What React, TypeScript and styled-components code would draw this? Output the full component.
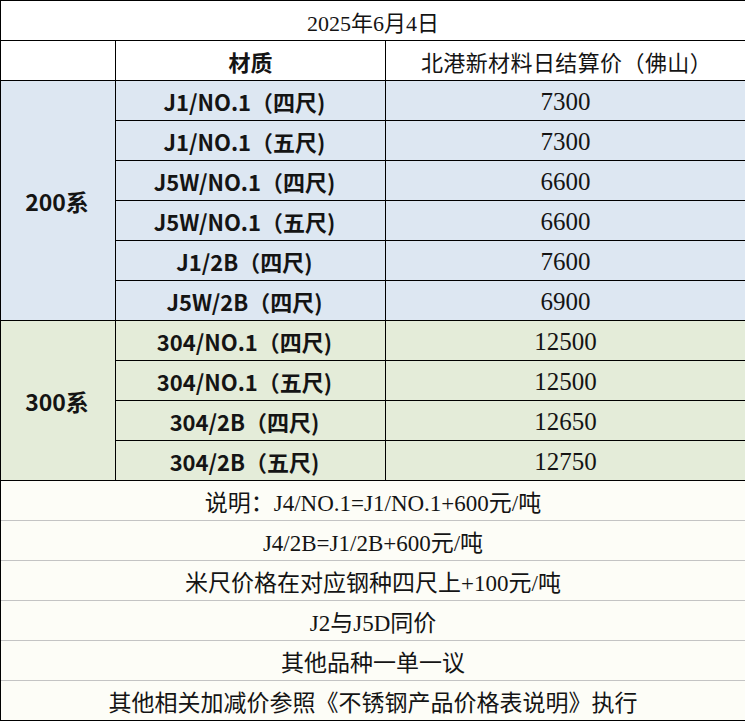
import React from "react";
import styled, { createGlobalStyle } from "styled-components";

const Global = createGlobalStyle`
  html, body { margin: 0; padding: 0; background: #ffffff; }
  body { font-family: "Liberation Serif", "Noto Sans CJK SC", serif; color: #141414; }
`;

const Sheet = styled.div`
  width: 745px;
  box-sizing: border-box;
  display: grid;
  grid-template-columns: 115px 270px 360px;
  grid-auto-rows: 40px;
  border-left: 1px solid #000;
  border-top: 1px solid #000;
`;

const Cell = styled.div<{ $bg?: string; $span?: number; $rows?: number; $line?: string }>`
  box-sizing: border-box;
  display: flex;
  align-items: center;
  justify-content: center;
  background: ${(p) => p.$bg || "#ffffff"};
  border-right: 1px solid #000;
  border-bottom: 1px solid ${(p) => p.$line || "#000"};
  grid-column: span ${(p) => p.$span || 1};
  grid-row: span ${(p) => p.$rows || 1};
  white-space: nowrap;
`;

const Title = styled.span`
  font-family: "Liberation Serif", "Noto Sans CJK SC", serif;
  font-size: 22px;
  padding-top: 1px;
`;

const HeadBold = styled.span`
  font-family: "Noto Sans CJK SC", sans-serif;
  font-weight: 700;
  font-size: 22px;
`;

const HeadPlain = styled.span`
  font-family: "Noto Sans CJK SC", sans-serif;
  font-size: 22px;
  letter-spacing: 0.4px;
  padding-left: 2px;
`;

const Material = styled.span`
  font-family: "Noto Sans CJK SC", sans-serif;
  font-weight: 700;
  font-size: 22px;
  padding-right: 12px;
`;

const Group = styled.span`
  font-family: "Noto Sans CJK SC", sans-serif;
  font-weight: 700;
  font-size: 23px;
  padding-right: 2px;
`;

const Price = styled.span`
  font-family: "Liberation Serif", serif;
  font-size: 25px;
  padding-top: 2px;
`;

const Note = styled.span`
  display: inline-block;
  font-family: "Liberation Serif", "Noto Sans CJK SC", serif;
  font-size: 23px;
  padding-top: 1px;
`;

const BLUE = "#dde7f2";
const GREEN = "#e4ecd9";
const NOTE_BG = "#fdfdf7";
const NOTE_LINE = "#c4c4c4";

const series = [
  {
    name: "200系",
    bg: BLUE,
    items: [
      ["J1/NO.1（四尺)", "7300"],
      ["J1/NO.1（五尺)", "7300"],
      ["J5W/NO.1（四尺)", "6600"],
      ["J5W/NO.1（五尺)", "6600"],
      ["J1/2B（四尺)", "7600"],
      ["J5W/2B（四尺)", "6900"],
    ],
  },
  {
    name: "300系",
    bg: GREEN,
    items: [
      ["304/NO.1（四尺)", "12500"],
      ["304/NO.1（五尺)", "12500"],
      ["304/2B（四尺)", "12650"],
      ["304/2B（五尺)", "12750"],
    ],
  },
];

const notes = [
  "说明：J4/NO.1=J1/NO.1+600元/吨",
  "J4/2B=J1/2B+600元/吨",
  "米尺价格在对应钢种四尺上+100元/吨",
  "J2与J5D同价",
  "其他品种一单一议",
  "其他相关加减价参照《不锈钢产品价格表说明》执行",
];

export default function App() {
  return (
    <>
      <Global />
      <Sheet>
        <Cell $span={3}>
          <Title>2025年6月4日</Title>
        </Cell>
        <Cell />
        <Cell>
          <HeadBold>材质</HeadBold>
        </Cell>
        <Cell>
          <HeadPlain>北港新材料日结算价（佛山）</HeadPlain>
        </Cell>
        {series.map((s) => (
          <React.Fragment key={s.name}>
            <Cell $bg={s.bg} $rows={s.items.length} style={{ gridColumn: "1" }}>
              <Group>{s.name}</Group>
            </Cell>
            {s.items.map(([m, p], i) => (
              <React.Fragment key={i}>
                <Cell $bg={s.bg}>
                  <Material>{m}</Material>
                </Cell>
                <Cell $bg={s.bg}>
                  <Price>{p}</Price>
                </Cell>
              </React.Fragment>
            ))}
          </React.Fragment>
        ))}
        {notes.map((n, i) => (
          <Cell
            key={n}
            $span={3}
            $bg={NOTE_BG}
            $line={i === notes.length - 1 ? "#000" : NOTE_LINE}
          >
            <Note>{n}</Note>
          </Cell>
        ))}
      </Sheet>
    </>
  );
}
